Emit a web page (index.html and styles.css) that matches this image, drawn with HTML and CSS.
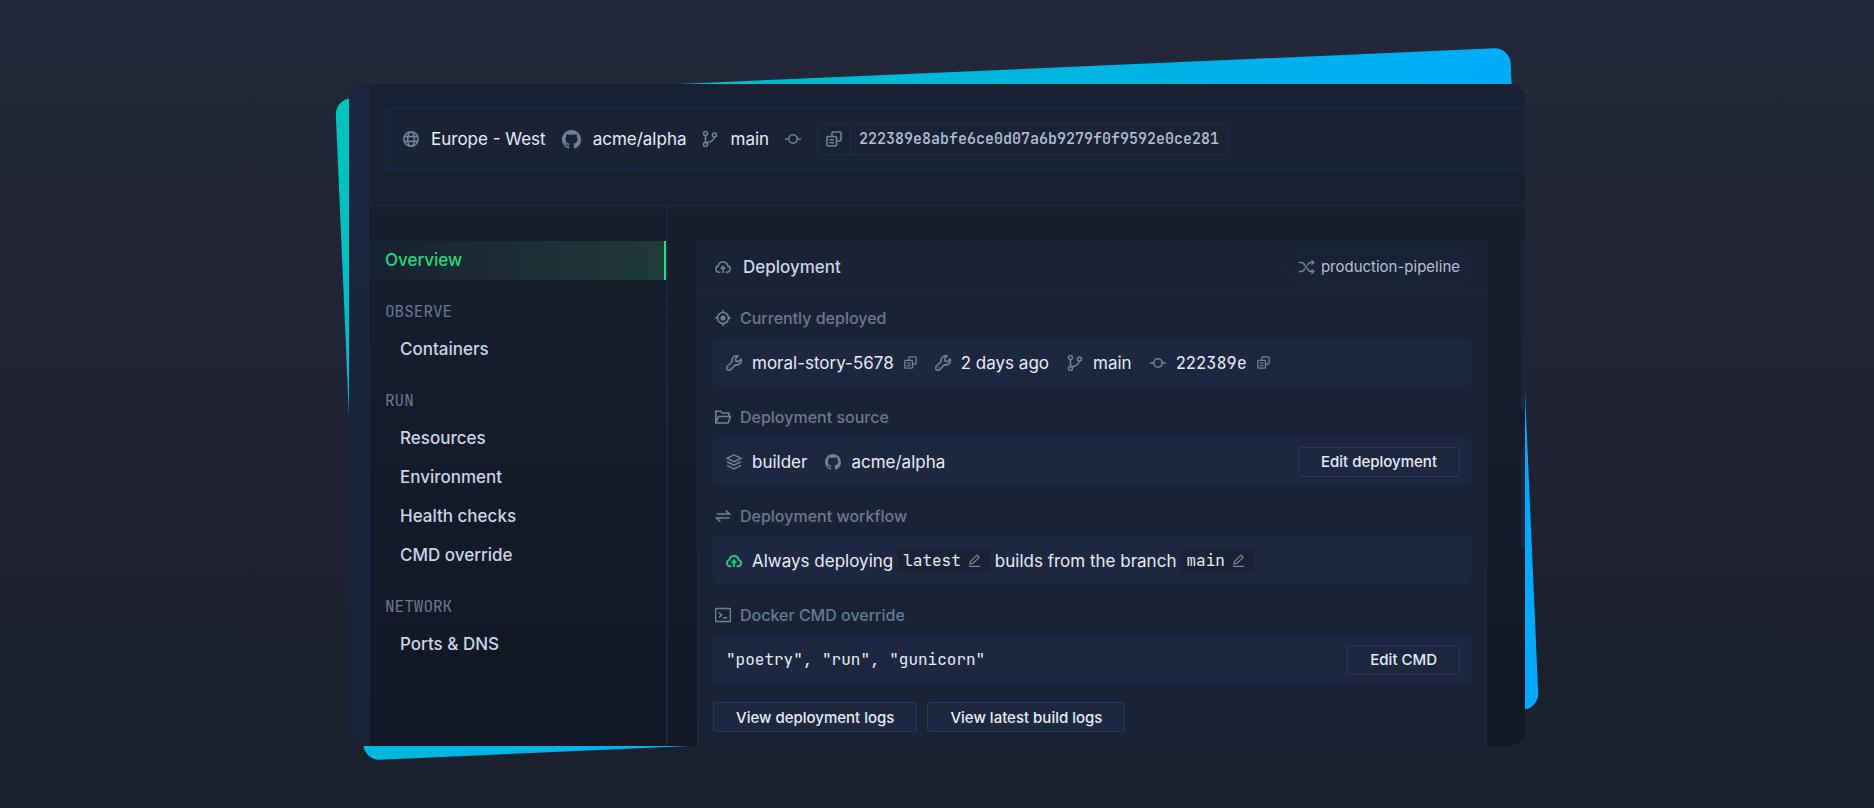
FILE: index.html
```html
<!DOCTYPE html>
<html lang="en">

<head>
    <meta charset="UTF-8">
    <meta name="viewport" content="width=device-width, initial-scale=1.0">
    <title>Deployment</title>
    <link rel="stylesheet" href="styles.css">
</head>

<body>
    <!-- icon set -->
    <svg class="sprite" aria-hidden="true">
        <symbol id="globe" viewBox="0 0 16 16">
            <circle cx="8" cy="8" r="7.200" />
            <ellipse cx="8" cy="8" rx="3.300" ry="7.200" />
            <path d="M1.500 5.600h13M1.500 10.400h13" />
        </symbol>
        <symbol id="github" viewBox="0 0 16 16">
            <path class="solid" d="M8 0C3.58 0 0 3.58 0 8c0 3.54 2.29 6.53 5.47 7.59.4.07.55-.17.55-.38 0-.19-.01-.82-.01-1.49-2.01.37-2.53-.49-2.69-.94-.09-.23-.48-.94-.82-1.13-.28-.15-.68-.52-.01-.53.63-.01 1.08.58 1.23.82.72 1.21 1.87.87 2.33.66.07-.52.28-.87.51-1.07-1.78-.2-3.64-.89-3.64-3.95 0-.87.31-1.59.82-2.15-.08-.2-.36-1.02.08-2.12 0 0 .67-.21 2.2.82.64-.18 1.32-.27 2-.27s1.36.09 2 .27c1.53-1.04 2.2-.82 2.2-.82.44 1.1.16 1.92.08 2.12.51.56.82 1.27.82 2.15 0 3.07-1.87 3.75-3.65 3.95.29.25.54.73.54 1.48 0 1.07-.01 1.93-.01 2.2 0 .21.15.46.55.38A8.01 8.01 0 0 0 16 8c0-4.42-3.58-8-8-8z" />
        </symbol>
        <symbol id="branch" viewBox="0 0 16 16">
            <circle cx="3.500" cy="2.500" r="2" />
            <circle cx="3.500" cy="13.500" r="2" />
            <circle cx="12.500" cy="4" r="2" />
            <path d="M3.500 4.500v7M12.300 6c-.3 3.500-3 4.800-7.300 5.800" />
        </symbol>
        <symbol id="commit" viewBox="0 0 16 16">
            <circle cx="8" cy="8" r="4.200" />
            <path d="M-.5 8h4.300M12.200 8h4.300" />
        </symbol>
        <symbol id="copy" viewBox="0 0 16 16">
            <rect x="1" y="5.500" width="9.500" height="9.500" rx="1" />
            <path d="M6 5.500V2a1 1 0 0 1 1-1h7a1 1 0 0 1 1 1v7a1 1 0 0 1-1 1h-3.500M3.500 8.700h4.500M3.500 11.800h4.500" />
        </symbol>
        <symbol id="cloud" viewBox="0 0 16 16">
            <path d="M5.500 13.200H4a3.200 3.200 0 0 1-.7-6.300 4.800 4.800 0 0 1 9.400 0 3.200 3.200 0 0 1-.7 6.300h-1.500M8 14V7.500M5.700 9.700 8 7.400l2.300 2.300" />
        </symbol>
        <symbol id="target" viewBox="0 0 16 16">
            <circle cx="8" cy="8" r="5.500" />
            <circle class="solid" cx="8" cy="8" r="2.500" />
            <path d="M8 0v3M8 13v3M0 8h3M13 8h3" />
        </symbol>
        <symbol id="wrench" viewBox="0 0 16 16">
            <path d="M11.900 1a4.500 4.500 0 0 0-5.700 5.500L1.300 11.300a2.300 2.300 0 0 0 3.400 3.300l4.800-4.900a4.500 4.500 0 0 0 5.600-5.600l-2.800 2.500-2.400-.5-.5-2.400z" />
            <circle class="solid" cx="3.200" cy="12.800" r=".6" />
        </symbol>
        <symbol id="folder" viewBox="0 0 16 16">
            <path d="M.8 14V2.200h4.900L7.200 4h6.600v3M.8 14 3.500 7.500H15.500L13 14z" />
        </symbol>
        <symbol id="layers" viewBox="0 0 16 16">
            <path d="M8 .9 15 4.300 8 7.700 1 4.300zM1 7.800l7 3.400 7-3.400M1 11.400l7 3.500 7-3.500" />
        </symbol>
        <symbol id="swap" viewBox="0 0 16 16">
            <path d="M1.500 6h13l-3.800-3.500M14.500 10h-13l3.800 3.500" />
        </symbol>
        <symbol id="terminal" viewBox="0 0 16 16">
            <rect x=".5" y="1.500" width="15" height="13" rx="1" />
            <path d="M4 5.500 6.500 8 4 10.500M8 10.700h4" />
        </symbol>
        <symbol id="pencil" viewBox="0 0 16 16">
            <path d="M2.500 12.300 3.300 9 11 1.300l2.700 2.700L6 11.500zM1 15.300h14" />
        </symbol>
        <symbol id="shuffle" viewBox="0 0 16 16">
            <path d="M0 3.500h2.500c1 0 1.500.3 2 1L9.700 11.500c.5.700 1 1 2 1H14M0 12.500h2.500c1 0 1.500-.3 2-1L6 9.500M8.300 6.400l1.400-1.900c.5-.7 1-1 2-1H14" />
            <path class="solid" d="M12.500 .5v6l3.500-3zM12.500 9.500v6l3.500-3z" />
        </symbol>
    </svg>

    <main class="stage">
        <div class="frame">
            <div class="glow"></div>
            <div class="window">
                <div class="rail"></div>
                <div class="app">
                    <header class="topbar">
                        <div class="meta">
                            <span class="item"><svg class="icon"><use href="#globe" /></svg>Europe - West</span>
                            <span class="item"><svg class="icon icon-lg"><use href="#github" /></svg>acme/alpha</span>
                            <span class="item"><svg class="icon"><use href="#branch" /></svg>main</span>
                            <span class="item"><svg class="icon"><use href="#commit" /></svg></span>
                            <span class="hash">
                                <button class="hash-copy" aria-label="Copy commit"><svg class="icon"><use href="#copy" /></svg></button>
                                <code>222389e8abfe6ce0d07a6b9279f0f9592e0ce281</code>
                            </span>
                        </div>
                    </header>
                    <div class="content">
                        <nav class="sidebar">
                            <a class="nav-link active" href="#">Overview</a>
                            <h3>OBSERVE</h3>
                            <a class="nav-link sub" href="#">Containers</a>
                            <h3>RUN</h3>
                            <a class="nav-link sub" href="#">Resources</a>
                            <a class="nav-link sub" href="#">Environment</a>
                            <a class="nav-link sub" href="#">Health checks</a>
                            <a class="nav-link sub" href="#">CMD override</a>
                            <h3>NETWORK</h3>
                            <a class="nav-link sub" href="#">Ports &amp; DNS</a>
                        </nav>
                        <section class="card">
                            <div class="card-head">
                                <svg class="icon"><use href="#cloud" /></svg>
                                <h2>Deployment</h2>
                                <a class="pill" href="#"><svg class="icon"><use href="#shuffle" /></svg>production-pipeline</a>
                            </div>
                            <div class="card-body">
                                <h4><svg class="icon"><use href="#target" /></svg>Currently deployed</h4>
                                <div class="row">
                                    <span class="item"><svg class="icon"><use href="#wrench" /></svg>moral-story-5678<button class="mini" aria-label="Copy name"><svg class="icon icon-sm"><use href="#copy" /></svg></button></span>
                                    <span class="item"><svg class="icon"><use href="#wrench" /></svg>2 days ago</span>
                                    <span class="item"><svg class="icon"><use href="#branch" /></svg>main</span>
                                    <span class="item"><svg class="icon"><use href="#commit" /></svg><code class="sha">222389e</code><button class="mini" aria-label="Copy commit"><svg class="icon icon-sm"><use href="#copy" /></svg></button></span>
                                </div>
                                <h4><svg class="icon"><use href="#folder" /></svg>Deployment source</h4>
                                <div class="row">
                                    <span class="item"><svg class="icon"><use href="#layers" /></svg>builder</span>
                                    <span class="item"><svg class="icon"><use href="#github" /></svg>acme/alpha</span>
                                    <button class="btn">Edit deployment</button>
                                </div>
                                <h4><svg class="icon"><use href="#swap" /></svg>Deployment workflow</h4>
                                <div class="row workflow">
                                    <svg class="icon green"><use href="#cloud" /></svg>
                                    <span>Always deploying</span>
                                    <button class="tag"><code>latest</code><svg class="icon icon-sm"><use href="#pencil" /></svg></button>
                                    <span>builds from the branch</span>
                                    <button class="tag"><code>main</code><svg class="icon icon-sm"><use href="#pencil" /></svg></button>
                                </div>
                                <h4><svg class="icon"><use href="#terminal" /></svg>Docker CMD override</h4>
                                <div class="row">
                                    <code>"poetry", "run", "gunicorn"</code>
                                    <button class="btn">Edit CMD</button>
                                </div>
                                <div class="actions">
                                    <button class="btn">View deployment logs</button>
                                    <button class="btn">View latest build logs</button>
                                </div>
                            </div>
                        </section>
                        <aside class="next">
                            <div class="next-card"></div>
                            <div class="next-card short"></div>
                        </aside>
                    </div>
                </div>
            </div>
        </div>
    </main>
</body>

</html>
```

FILE: styles.css
```css
* {
    box-sizing: border-box;
}

body {
    margin: 0;
    min-height: 100vh;
    font-family: Inter, "Liberation Sans", sans-serif;
    font-size: 17px;
    color: #e6ecf4;
    background: linear-gradient(#23293a, #202334 50%, #1a202e);
}

code {
    font-family: "JetBrains Mono", "Roboto Mono", "DejaVu Sans Mono", monospace;
    font-size: 16px;
}

button {
    font-family: inherit;
    color: inherit;
    cursor: pointer;
}

a {
    color: inherit;
    text-decoration: none;
}

.sprite {
    position: absolute;
    width: 0;
    height: 0;
}

.icon {
    flex: none;
    width: 16px;
    height: 16px;
    fill: none;
    stroke: #718096;
    stroke-width: 1.6;
    color: #718096;
    overflow: visible;
}

.icon-lg {
    width: 19px;
    height: 19px;
}

.icon-sm {
    width: 13px;
    height: 13px;
}

.solid {
    fill: currentColor;
    stroke: none;
}

.green {
    stroke: #22c978;
    stroke-width: 2;
}

.stage {
    padding: 84px 24px 62px;
    overflow: hidden;
}

.frame {
    position: relative;
    max-width: 1176px;
    margin: 0 auto;
}

/* tilted gradient sheet behind the window */
.glow {
    position: absolute;
    inset: -11px 0 11px;
    border-radius: 16px;
    background: linear-gradient(135deg, #00c4b8, #00aaff 70%);
    transform: rotate(-2.5deg);
}

.window {
    position: relative;
    display: flex;
    height: calc(100vh - 146px);
    border-radius: 16px;
    overflow: hidden;
    background: #151c2b;
}

.rail {
    width: 21px;
    background: linear-gradient(#1b2540, #192438);
}

.app {
    flex: 1;
    min-width: 0;
    background: linear-gradient(#182130, #151c2b 40%, #111725);
}

.topbar {
    padding: 23px 0 34px 15px;
    background: #182132;
    border-bottom: 2px solid #1b2540;
}

.meta {
    display: flex;
    align-items: center;
    gap: 16px;
    height: 64px;
    padding-left: 16px;
    background: #1a2336;
    border: 2px solid #1b2643;
    border-right: 0;
    border-radius: 4px 0 0 4px;
}

.item {
    display: flex;
    align-items: center;
    gap: 10px;
}

.meta .item {
    gap: 12px;
}

.hash {
    display: flex;
    align-items: center;
    height: 31px;
    border: 1px solid #202b4a;
    border-radius: 3px;
    color: #b4c0d3;
}

.hash-copy {
    display: flex;
    align-items: center;
    height: 100%;
    padding: 0 8px;
    border: 0;
    border-right: 1px solid #202b4a;
    background: none;
}

.hash code {
    padding: 0 8px;
    font-size: 15px;
    font-weight: 500;
}

.content {
    display: flex;
}

.sidebar {
    width: 298px;
    height: 560px;
    padding-top: 34px;
    border-right: 2px solid #1b2540;
}

.sidebar h3 {
    margin: 17px 0 4px;
    padding-left: 15px;
    font-family: "JetBrains Mono", "Roboto Mono", "DejaVu Sans Mono", monospace;
    font-size: 16px;
    font-weight: 400;
    line-height: 29px;
    color: #697991;
}

.nav-link {
    display: block;
    padding-left: 15px;
    font-weight: 500;
    line-height: 39px;
    color: #cbd5e5;
}

.sub {
    padding-left: 30px;
}

.active {
    color: #28d97d;
    border-right: 2px solid #28d97d;
    background: linear-gradient(90deg, #172230, #213a3a);
}

.card {
    flex: 1;
    height: 560px;
    margin: 34px 34px 0 29px;
    background: #1a2336;
    border: 1px solid #1e2949;
    border-radius: 4px 4px 0 0;
}

.card-head {
    display: flex;
    align-items: center;
    gap: 12px;
    height: 50px;
    padding: 0 15px 0 17px;
    border-bottom: 1px solid #1e2949;
}

.card-head h2 {
    margin: 0;
    font-size: 17px;
    font-weight: 500;
    color: #cbd5e5;
}

.pill {
    display: flex;
    align-items: center;
    gap: 6px;
    height: 30px;
    margin-left: auto;
    padding: 0 10px 0 12px;
    border: 1px solid #1e2949;
    border-radius: 15px;
    font-size: 15px;
    color: #b4c0d3;
}

.card-body {
    padding: 11px 15px;
}

.card-body h4 {
    display: flex;
    align-items: center;
    gap: 9px;
    margin: 0;
    padding-left: 2px;
    font-size: 16px;
    font-weight: 500;
    line-height: 30px;
    color: #697991;
}

.row {
    display: flex;
    align-items: center;
    gap: 18px;
    height: 47px;
    margin: 6px 0 16px;
    padding: 0 10px 0 12px;
    background: #1e2740;
    border: 1px solid #1d2745;
    border-radius: 4px;
}

.row .btn {
    margin-left: auto;
}

.sha {
    font-size: 17px;
}

.mini {
    display: flex;
    padding: 0;
    border: 0;
    background: none;
}

.workflow {
    gap: 5px;
}

.workflow .green {
    margin-right: 5px;
}

.tag {
    display: flex;
    align-items: center;
    gap: 7px;
    height: 24px;
    padding: 0 9px 0 5px;
    border: 0;
    border-radius: 4px;
    background: #1a2234;
}

.btn {
    height: 30px;
    padding: 0 22px;
    font-size: 15px;
    font-weight: 500;
    background: #1d2740;
    border: 1px solid #2a3859;
    border-radius: 3px;
}

.actions {
    display: flex;
    gap: 10px;
    margin-top: 19px;
}

.next {
    width: 4px;
    padding-top: 34px;
}

.next-card {
    height: 170px;
    margin-bottom: 35px;
    background: #1b2439;
    border-left: 1px solid #1d2745;
    border-radius: 4px 0 0 4px;
}

.short {
    height: 103px;
}
```
